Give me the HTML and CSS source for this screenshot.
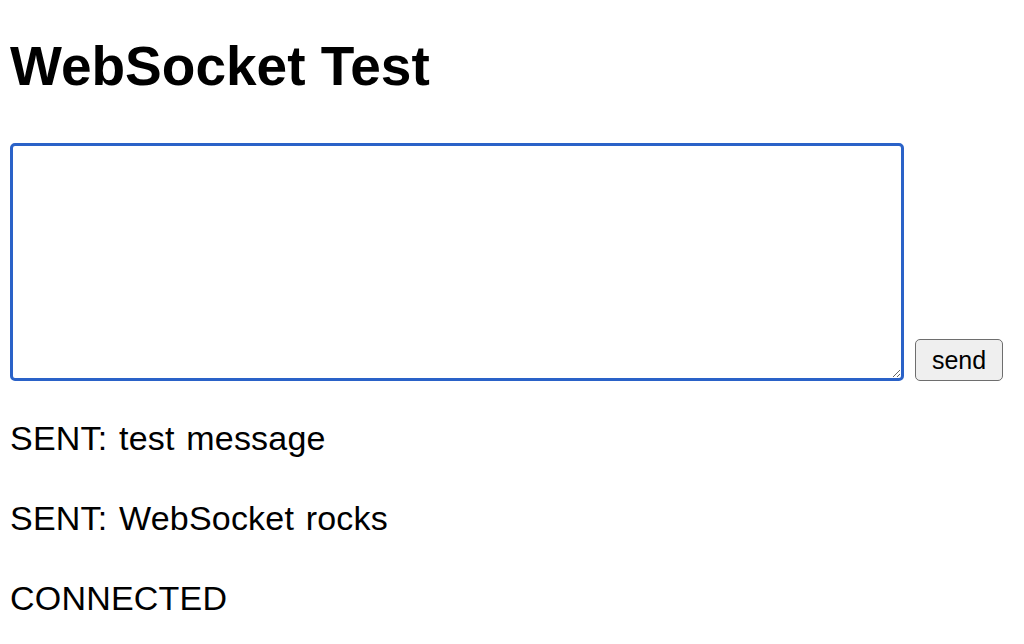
FILE: index.html
```html
<!DOCTYPE html>
<html lang="en">
<head>
<meta charset="utf-8">
<title>WebSocket Test</title>
<link rel="stylesheet" href="styles.css">
</head>
<body>
<main class="page">
  <h1 class="title">WebSocket Test</h1>
  <div class="composer">
    <textarea class="message-input"></textarea>
    <button class="send-button" type="button">send</button>
  </div>
  <div class="log">
    <p class="log-line">SENT: test message</p>
    <p class="log-line">SENT: WebSocket rocks</p>
    <p class="log-line">CONNECTED</p>
  </div>
</main>
</body>
</html>
```

FILE: styles.css
```css
html, body {
  margin: 0;
  padding: 0;
  background: #ffffff;
}

body {
  font-family: "Liberation Sans", Arial, sans-serif;
  color: #000000;
}

.page {
  padding: 35px 10px 0 10px;
}

.title {
  margin: 0;
  font-size: 55px;
  line-height: 62px;
  font-weight: 700;
}

.composer {
  display: flex;
  align-items: flex-end;
  gap: 11px;
  margin-top: 46px;
}

.message-input {
  box-sizing: border-box;
  width: 894px;
  height: 238px;
  margin: 0;
  border: 3px solid #2a62c8;
  border-radius: 5px;
  outline: none;
  background: #ffffff;
  font-family: "Liberation Mono", monospace;
  font-size: 16px;
}

.send-button {
  box-sizing: border-box;
  width: 88px;
  height: 42px;
  margin: 0;
  padding: 0;
  border: 1.5px solid #6e6e6e;
  border-radius: 5px;
  background: #efefef;
  color: #000000;
  font-family: "Liberation Sans", Arial, sans-serif;
  font-size: 25px;
  line-height: 1;
}

.log {
  display: flex;
  flex-direction: column;
  gap: 32px;
  margin-top: 33px;
}

.log-line {
  margin: 0;
  font-size: 34px;
  line-height: 48px;
  letter-spacing: 0.2px;
  word-spacing: 2px;
}
```
